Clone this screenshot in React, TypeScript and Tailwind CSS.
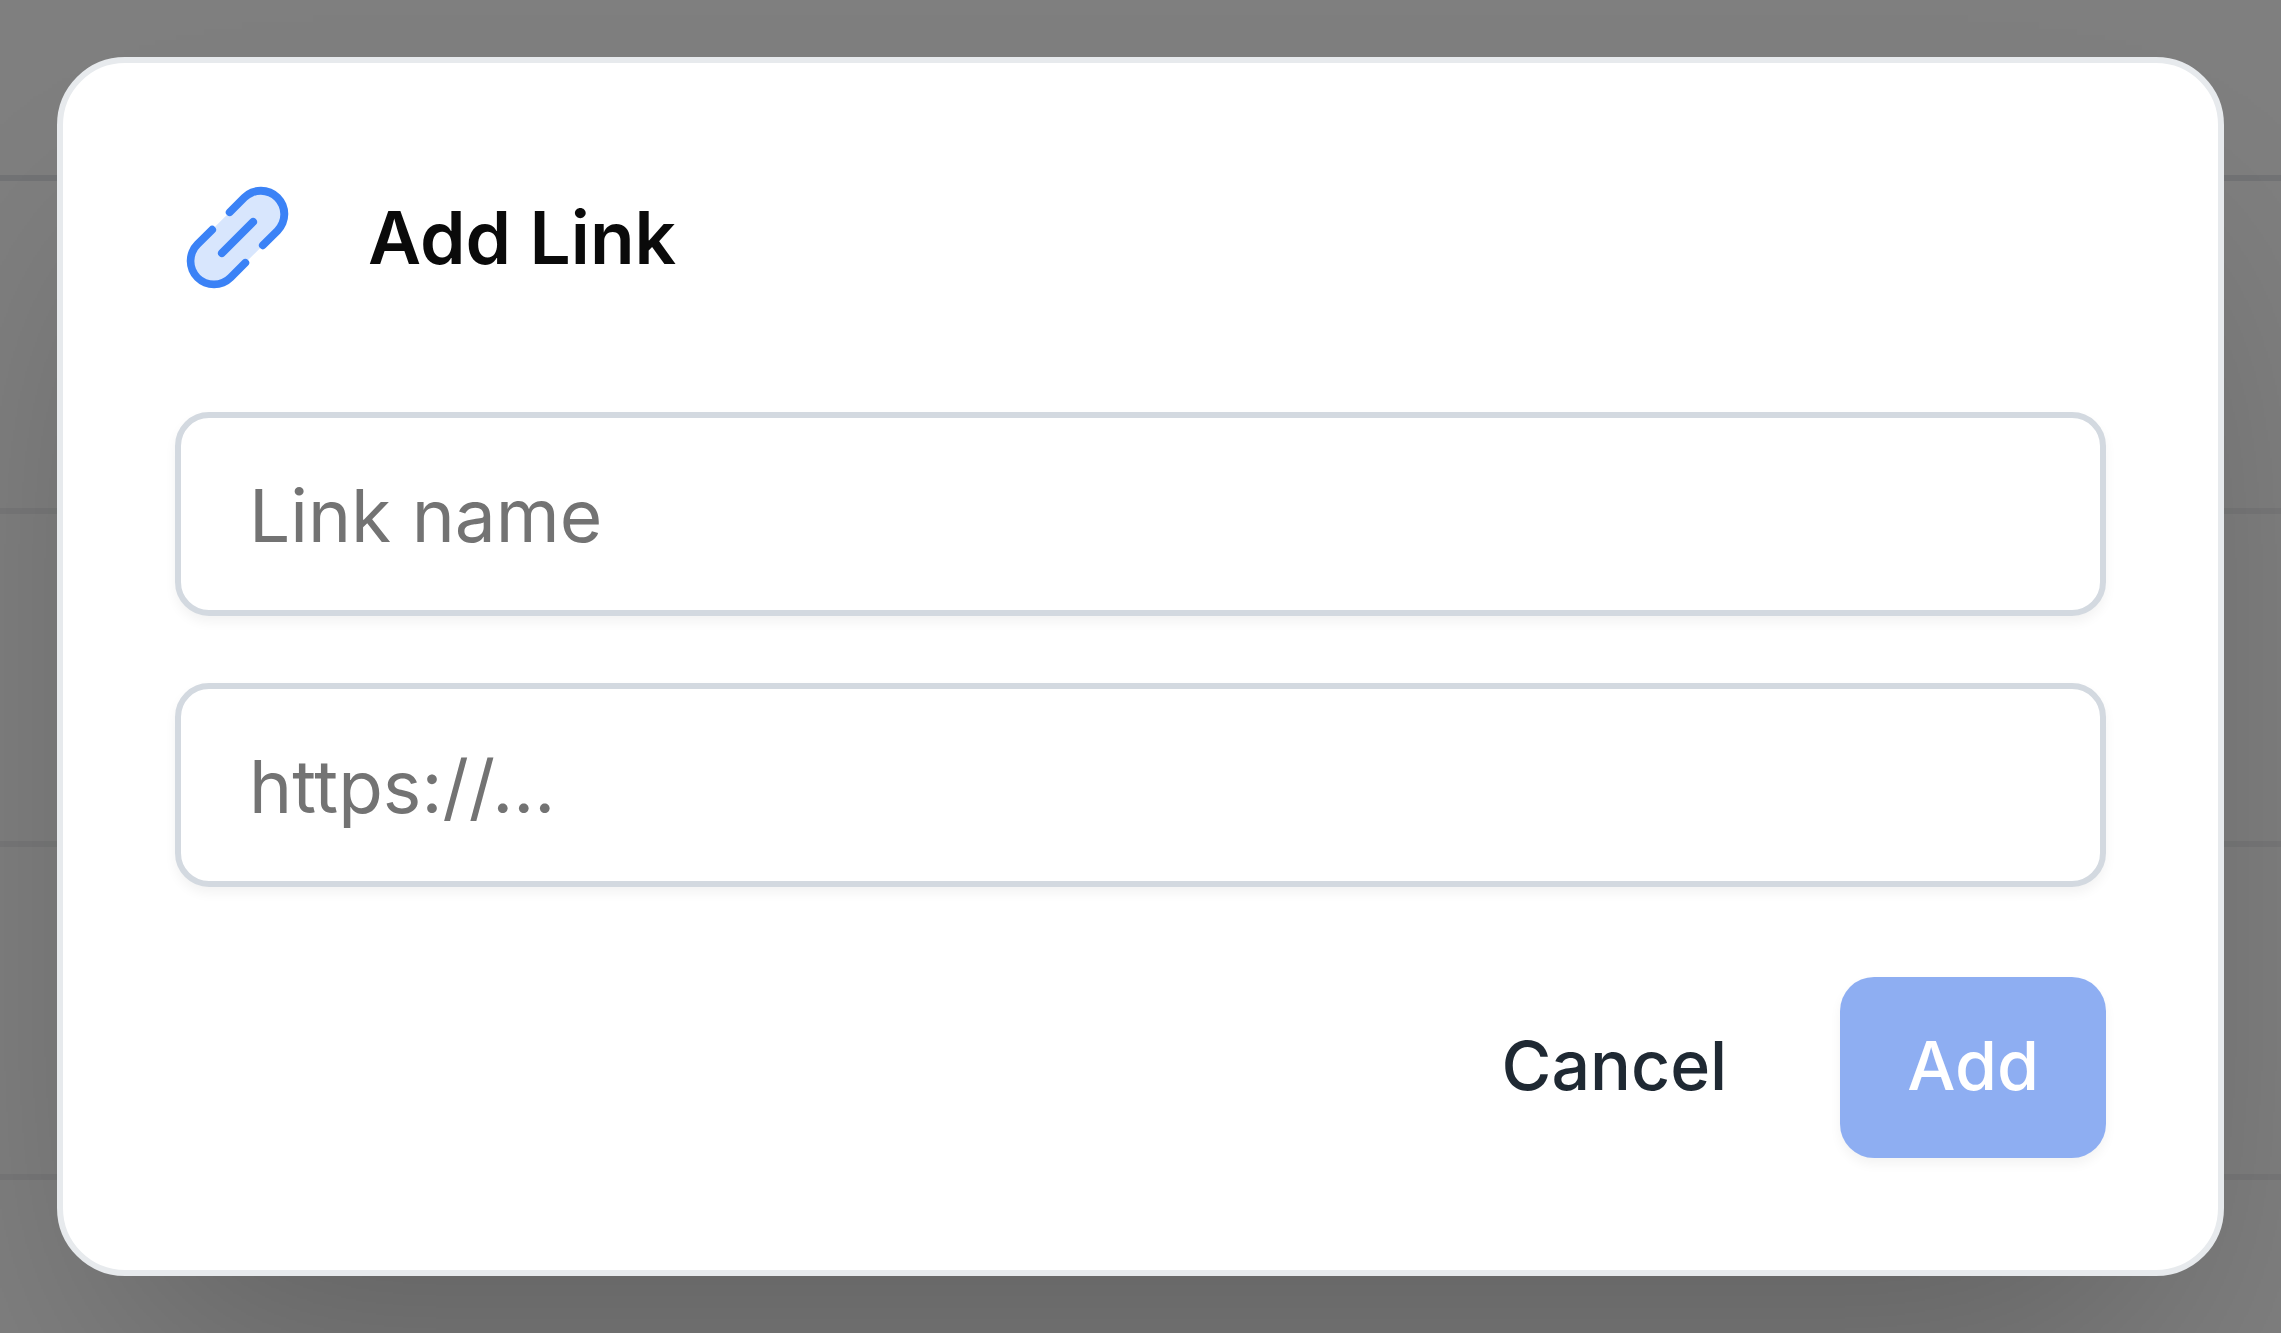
import { useState } from 'react';
import type { FormEvent } from 'react';
import { PiLinkSimpleDuotone } from 'react-icons/pi';

const ROWS = ['row-1', 'row-2', 'row-3', 'row-4'];

const inputClass =
  'h-[204px] w-full rounded-[34px] border-6 border-[#d3d9e0] bg-white px-[68px] pt-0.5 text-[73px] text-[#0a0a0a] shadow-[0_6px_12px_0_rgba(0,0,0,0.05)] outline-none placeholder:text-[#737373]';

const buttonClass = 'h-[181px] rounded-[34px] px-[67px] pb-1.5 text-[68px] font-medium';

function PageBehind() {
  return (
    <div aria-hidden="true" className="h-screen overflow-hidden bg-white">
      <div className="h-[181px] border-b-6 border-[#e5e7eb]" />
      {ROWS.map((id) => (
        <div key={id} className="h-[333px] border-b-6 border-[#f0f1f3]" />
      ))}
    </div>
  );
}

export default function App() {
  const [name, setName] = useState('');
  const [url, setUrl] = useState('');
  const canAdd = name.trim() !== '' && url.trim() !== '';

  function handleSubmit(event: FormEvent<HTMLFormElement>) {
    event.preventDefault();
    setName('');
    setUrl('');
  }

  return (
    <div className="font-['Inter',sans-serif]">
      <PageBehind />
      <div className="fixed inset-0 flex items-center overflow-hidden bg-black/50 px-[57px]">
        <form
          role="dialog"
          aria-modal="true"
          aria-labelledby="add-link-title"
          onSubmit={handleSubmit}
          className="w-full rounded-[68px] border-6 border-[#e7eaed] bg-white p-28 shadow-[0_141px_282px_-68px_rgba(0,0,0,0.25)]"
        >
          <div className="flex items-center gap-[68px]">
            <PiLinkSimpleDuotone className="size-[125px] shrink-0 text-[#3b82f6]" aria-hidden="true" />
            <h2 id="add-link-title" className="text-[73px] leading-[112px] font-semibold text-[#0a0a0a]">
              Add Link
            </h2>
          </div>

          <div className="mt-28 flex flex-col gap-[67px]">
            <input
              type="text"
              aria-label="Link name"
              placeholder="Link name"
              value={name}
              onChange={(e) => setName(e.target.value)}
              className={inputClass}
            />
            <input
              type="url"
              aria-label="Link URL"
              placeholder="https://..."
              value={url}
              onChange={(e) => setUrl(e.target.value)}
              className={inputClass}
            />
          </div>

          <div className="mt-[90px] flex justify-end gap-[46px]">
            <button type="button" className={`${buttonClass} text-[#1f2933]`}>
              Cancel
            </button>
            <button
              type="submit"
              disabled={!canAdd}
              className={`${buttonClass} bg-[#2060e6] text-white shadow-[0_6px_12px_0_rgba(0,0,0,0.1)] disabled:opacity-50`}
            >
              Add
            </button>
          </div>
        </form>
      </div>
    </div>
  );
}
